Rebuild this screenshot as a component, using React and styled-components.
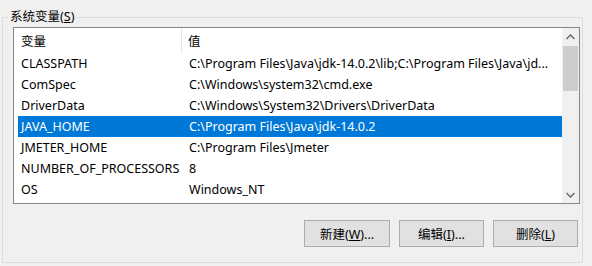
import React from 'react';
import styled, { createGlobalStyle } from 'styled-components';

const FONT = '"Noto Sans", "Noto Sans CJK SC", sans-serif';

const rows = [
    { name: 'CLASSPATH', value: 'C:\\Program Files\\Java\\jdk-14.0.2\\lib;C:\\Program Files\\Java\\jd...' },
    { name: 'ComSpec', value: 'C:\\Windows\\system32\\cmd.exe' },
    { name: 'DriverData', value: 'C:\\Windows\\System32\\Drivers\\DriverData' },
    { name: 'JAVA_HOME', value: 'C:\\Program Files\\Java\\jdk-14.0.2', selected: true },
    { name: 'JMETER_HOME', value: 'C:\\Program Files\\Jmeter' },
    { name: 'NUMBER_OF_PROCESSORS', value: '8' },
    { name: 'OS', value: 'Windows_NT' },
];

const App = () => {
    return (
        <Page>
            <GlobalStyle />
            <GroupBox>
                <Legend>系统变量(<u>S</u>)</Legend>
                <ListBox>
                    <ListContent>
                        <Header>
                            <HeaderCell width={168} divider>变量</HeaderCell>
                            <HeaderCell>值</HeaderCell>
                        </Header>
                        {rows.map(row => (
                            <Row key={row.name} selected={row.selected}>
                                <NameCell>{row.name}</NameCell>
                                <ValueCell>{row.value}</ValueCell>
                            </Row>
                        ))}
                    </ListContent>
                    <ScrollBar>
                        <Arrow>
                            <svg width="9" height="6" viewBox="0 0 9 6">
                                <path d="M0.5 5 L4.5 1 L8.5 5" fill="none" stroke="#606060" strokeWidth="1.3" />
                            </svg>
                        </Arrow>
                        <Track>
                            <Thumb />
                        </Track>
                        <Arrow>
                            <svg width="9" height="6" viewBox="0 0 9 6">
                                <path d="M0.5 1 L4.5 5 L8.5 1" fill="none" stroke="#606060" strokeWidth="1.3" />
                            </svg>
                        </Arrow>
                    </ScrollBar>
                </ListBox>
                <ButtonRow>
                    <Button width={86}>新建(<u>W</u>)...</Button>
                    <Button>编辑(<u>I</u>)...</Button>
                    <Button>删除(<u>L</u>)</Button>
                </ButtonRow>
            </GroupBox>
        </Page>
    )
}

export default App;

const GlobalStyle = createGlobalStyle`
    html, body {
        margin: 0;
        padding: 0;
        background: #f0f0f0;
    }
    body {
        font: 12.5px ${FONT};
        color: #000;
    }
`

const Page = styled.div`
    width: 592px;
    height: 266px;
    overflow: hidden;
    padding: 9px 0 0 2px;
    box-sizing: border-box;
`

const GroupBox = styled.fieldset`
    box-sizing: border-box;
    width: 581px;
    height: 254px;
    margin: 0;
    padding: 0 3px 0 10px;
    border: 1px solid #dcdcdc;
    min-inline-size: 0;
    display: flex;
    flex-direction: column;
`

const Legend = styled.legend`
    padding: 0 2px;
    margin-left: -5px;
    line-height: 16px;
    font-size: 12.5px;
`

const ListBox = styled.div`
    margin-top: 2px;
    width: 567px;
    height: 177px;
    box-sizing: border-box;
    border: 1px solid #828790;
    background: #fff;
    display: flex;
`

const ListContent = styled.div`
    flex: 1;
    min-width: 0;
    overflow: hidden;
`

const Header = styled.div`
    height: 25px;
    display: flex;
    align-items: center;
`

const HeaderCell = styled.div`
    box-sizing: border-box;
    width: ${p => p.width ? `${p.width}px` : 'auto'};
    flex: ${p => p.width ? 'none' : 1};
    height: 100%;
    display: flex;
    align-items: center;
    padding-left: ${p => p.divider ? '7px' : '6px'};
    border-right: ${p => p.divider ? '1px solid #e5e5e5' : 'none'};
`

const Row = styled.div`
    height: 21px;
    margin-left: 4px;
    display: flex;
    align-items: center;
    background: ${p => p.selected ? '#0078d7' : 'transparent'};
    color: ${p => p.selected ? '#fff' : '#000'};
    white-space: nowrap;
`

const NameCell = styled.div`
    width: 165px;
    flex: none;
    padding-left: 3px;
    box-sizing: border-box;
    overflow: hidden;
`

const ValueCell = styled.div`
    flex: 1;
    min-width: 0;
    padding: 0 6px;
`

const ScrollBar = styled.div`
    width: 17px;
    flex: none;
    background: #f0f0f0;
    display: flex;
    flex-direction: column;
`

const Arrow = styled.div`
    height: 17px;
    display: flex;
    align-items: center;
    justify-content: center;
`

const Track = styled.div`
    flex: 1;
    padding: 1px 1px 0 1px;
`

const Thumb = styled.div`
    height: 45px;
    background: #cdcdcd;
`

const ButtonRow = styled.div`
    margin-top: 16px;
    margin-right: 1px;
    display: flex;
    justify-content: flex-end;
    gap: 9px;
`

const Button = styled.button`
    width: ${p => p.width || 85}px;
    height: 27px;
    box-sizing: border-box;
    background: #e1e1e1;
    border: 1px solid #adadad;
    border-radius: 0;
    padding: 0;
    font: 12.5px ${FONT};
    color: #000;
`
